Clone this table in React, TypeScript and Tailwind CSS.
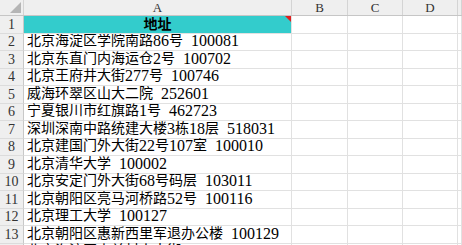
import React from "react";

const rows = [
  "北京海淀区学院南路86号  100081",
  "北京东直门内海运仓2号  100702",
  "北京王府井大街277号  100746",
  "威海环翠区山大二院  252601",
  "宁夏银川市红旗路1号  462723",
  "深圳深南中路统建大楼3栋18层  518031",
  "北京建国门外大街22号107室  100010",
  "北京清华大学  100002",
  "北京安定门外大街68号码层  103011",
  "北京朝阳区亮马河桥路52号  100116",
  "北京理工大学  100127",
  "北京朝阳区惠新西里军退办公楼  100129",
  "北京海淀区中关村南大街  100081",
];

const grid = "grid grid-cols-[24px_268px_56px_55px_55px_1fr]";
const serif = "font-['Liberation_Serif','Noto_Sans_CJK_SC',serif]";

// latin runs are set a bit larger, like Times next to SimSun in the sheet
function Mixed({ text }: { text: string }) {
  const parts = text.split(/([0-9 ]+)/).filter(Boolean);
  return (
    <>
      {parts.map((p, i) =>
        /^[0-9 ]+$/.test(p) ? (
          <span key={i} className="text-[16px] whitespace-pre">
            {p}
          </span>
        ) : (
          <span key={i} className="text-[14px]">
            {p}
          </span>
        )
      )}
    </>
  );
}

function RowHead({ n }: { n: number }) {
  return (
    <div className="flex items-center justify-center bg-[#efefef] border-r border-b border-r-[#c8c8c8] border-b-[#dcdcdc] text-[14px] text-[#333]">
      {n}
    </div>
  );
}

const cell = "border-r border-b border-[#e1e1e1]";

export default function App() {
  return (
    <div className={`w-[462px] h-[245px] overflow-hidden bg-white ${serif}`}>
      <div className={`${grid} h-4 bg-[#efefef] border-b border-[#c6c6c6] text-[13px] text-[#333] leading-none`}>
        <div className="relative border-r border-[#d4d4d4]">
          <svg className="absolute right-[2px] bottom-[2px]" width="11" height="11" viewBox="0 0 11 11">
            <polygon points="11,0 11,11 0,11" fill="#b5b5b5" />
          </svg>
        </div>
        {["A", "B", "C", "D", ""].map((c, i) => (
          <div key={i} className="flex items-center justify-center border-r border-[#d4d4d4]">
            {c}
          </div>
        ))}
      </div>

      <div className={`${grid} auto-rows-[17.5px]`}>
        <RowHead n={1} />
        <div className="relative flex items-center justify-center bg-[#33cccc] border-r border-b border-[#e1e1e1] text-[14px] font-bold text-black">
          地址
          <svg className="absolute right-0 top-0" width="6" height="6" viewBox="0 0 6 6">
            <polygon points="0,0 6,0 6,6" fill="#e02020" />
          </svg>
        </div>
        <div className={cell} />
        <div className={cell} />
        <div className={cell} />
        <div className={cell} />

        {rows.map((r, i) => (
          <React.Fragment key={i}>
            <RowHead n={i + 2} />
            <div className={`${cell} flex items-end pl-[3px] pb-[1px] whitespace-nowrap text-black leading-[16px]`}>
              <Mixed text={r} />
            </div>
            <div className={cell} />
            <div className={cell} />
            <div className={cell} />
            <div className={cell} />
          </React.Fragment>
        ))}
      </div>
    </div>
  );
}
